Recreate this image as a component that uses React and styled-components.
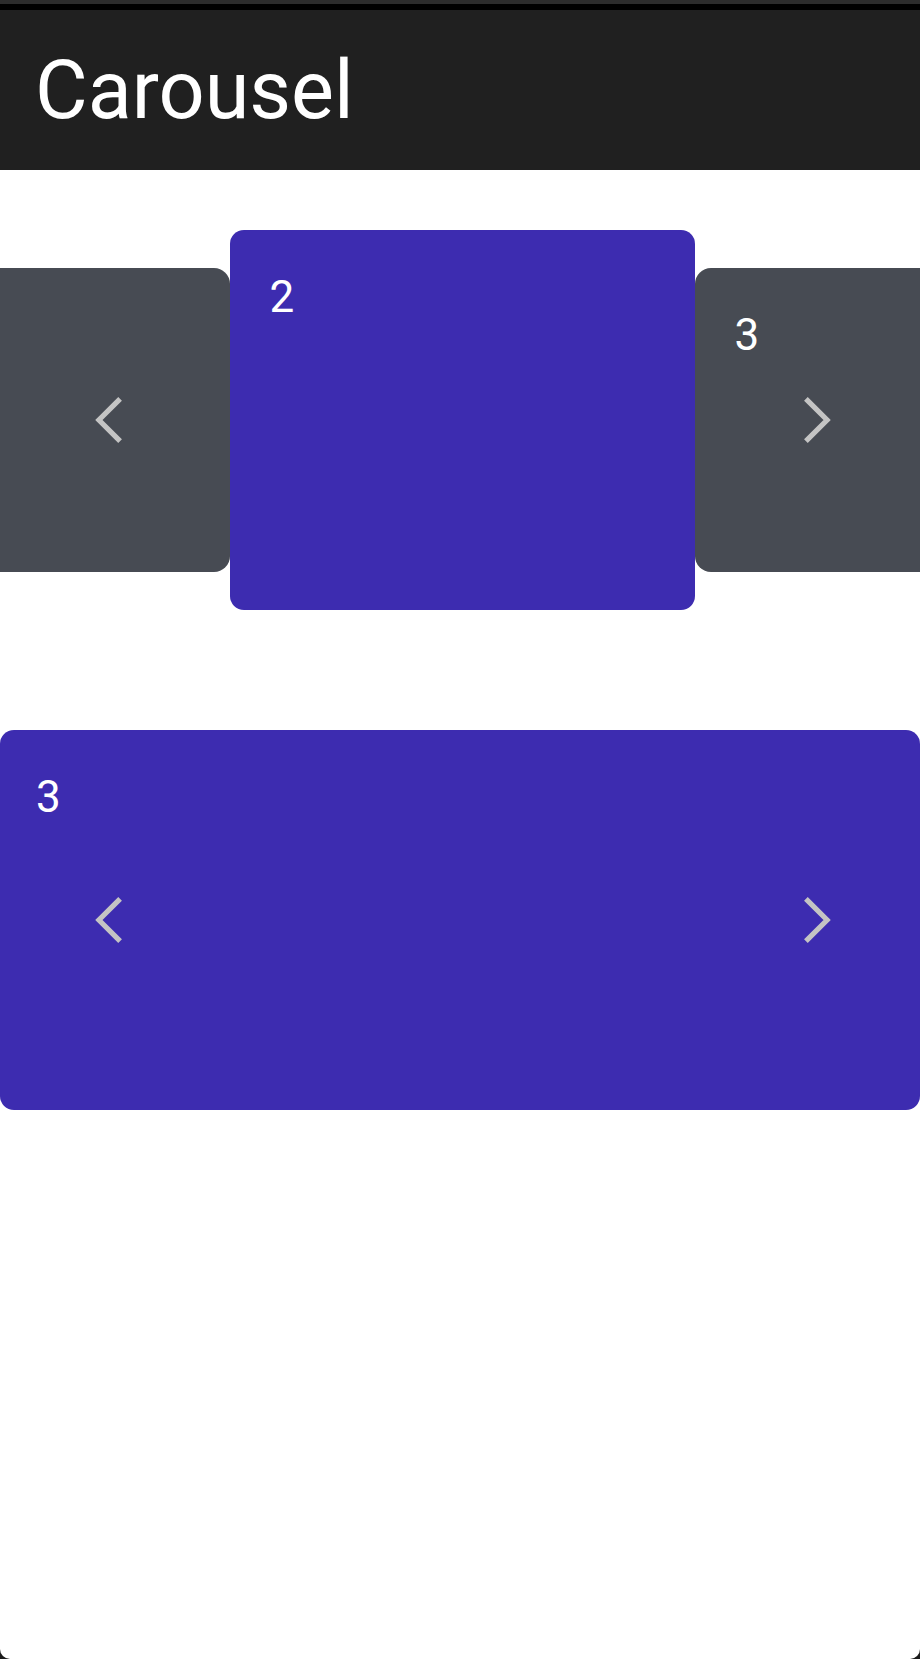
import React from "react";
import styled, { createGlobalStyle } from "styled-components";

const GlobalStyle = createGlobalStyle`
  html, body {
    margin: 0;
    padding: 0;
    background: #1b1b1b;
  }
  body {
    font-family: Roboto, "Noto Sans", "Liberation Sans", sans-serif;
  }
  * { box-sizing: border-box; }
`;

const Screen = styled.div`
  min-height: 1659px;
  background: #ffffff;
  border-bottom-left-radius: 10px;
  border-bottom-right-radius: 10px;
  overflow: hidden;
`;

const StatusStrip = styled.div`
  height: 4px;
  background: #2c2c2c;
`;

const StatusDivider = styled.div`
  height: 6px;
  background: #000000;
`;

const Header = styled.header`
  height: 160px;
  background: #202020;
  display: flex;
  align-items: center;
  padding-left: 35px;
`;

const Title = styled.h1`
  margin: 0;
  font-size: 81px;
  font-weight: 400;
  line-height: normal;
  color: #ffffff;
`;

const Main = styled.main`
  padding-top: 60px;
  display: flex;
  flex-direction: column;
  gap: 120px;
`;

const Carousel = styled.section`
  position: relative;
  overflow: hidden;
`;

const Track = styled.div`
  display: flex;
  align-items: center;
  justify-content: ${(p) => p.$justify || "center"};
  padding-left: ${(p) => p.$shift || 0}px;
`;

const Slide = styled.div`
  flex-shrink: 0;
  width: ${(p) => p.$w}px;
  height: ${(p) => p.$h}px;
  background: ${(p) => (p.$active ? "#3d2cb0" : "#474b53")};
  border-radius: ${(p) => (p.$active ? 14 : 16)}px;
  padding: 41px 0 0 ${(p) => p.$padLeft || 40}px;
`;

const SlideNumber = styled.span`
  display: block;
  font-size: 44px;
  line-height: normal;
  color: #ffffff;
`;

const ArrowButton = styled.button`
  position: absolute;
  top: 50%;
  transform: translateY(-50%);
  ${(p) => (p.$side === "left" ? "left: 94px;" : "right: 88px;")}
  width: 29px;
  height: 48px;
  padding: 0;
  margin: 0;
  border: none;
  background: none;
  display: flex;
  cursor: pointer;
`;

const Chevron = ({ dir }) => (
  <svg width="29" height="48" viewBox="0 0 29 48" fill="none">
    <polyline
      points={dir === "left" ? "26.1,2.8 4.9,24 26.1,45.2" : "2.9,2.8 24.1,24 2.9,45.2"}
      stroke="#c4c4c4"
      strokeWidth="5.2"
      strokeLinecap="butt"
      strokeLinejoin="miter"
    />
  </svg>
);

export default function App() {
  return (
    <>
      <GlobalStyle />
      <Screen>
        <StatusStrip />
        <StatusDivider />
        <Header>
          <Title>Carousel</Title>
        </Header>
        <Main>
          <Carousel>
            <Track $shift={4}>
              <Slide $w={372} $h={304}>
                <SlideNumber>1</SlideNumber>
              </Slide>
              <Slide $w={465} $h={380} $active>
                <SlideNumber>2</SlideNumber>
              </Slide>
              <Slide $w={372} $h={304}>
                <SlideNumber>3</SlideNumber>
              </Slide>
            </Track>
            <ArrowButton $side="left" aria-label="Previous">
              <Chevron dir="left" />
            </ArrowButton>
            <ArrowButton $side="right" aria-label="Next">
              <Chevron dir="right" />
            </ArrowButton>
          </Carousel>
          <Carousel>
            <Track $justify="flex-start">
              <Slide $w={920} $h={380} $active $padLeft={36}>
                <SlideNumber>3</SlideNumber>
              </Slide>
            </Track>
            <ArrowButton $side="left" aria-label="Previous">
              <Chevron dir="left" />
            </ArrowButton>
            <ArrowButton $side="right" aria-label="Next">
              <Chevron dir="right" />
            </ArrowButton>
          </Carousel>
        </Main>
      </Screen>
    </>
  );
}
